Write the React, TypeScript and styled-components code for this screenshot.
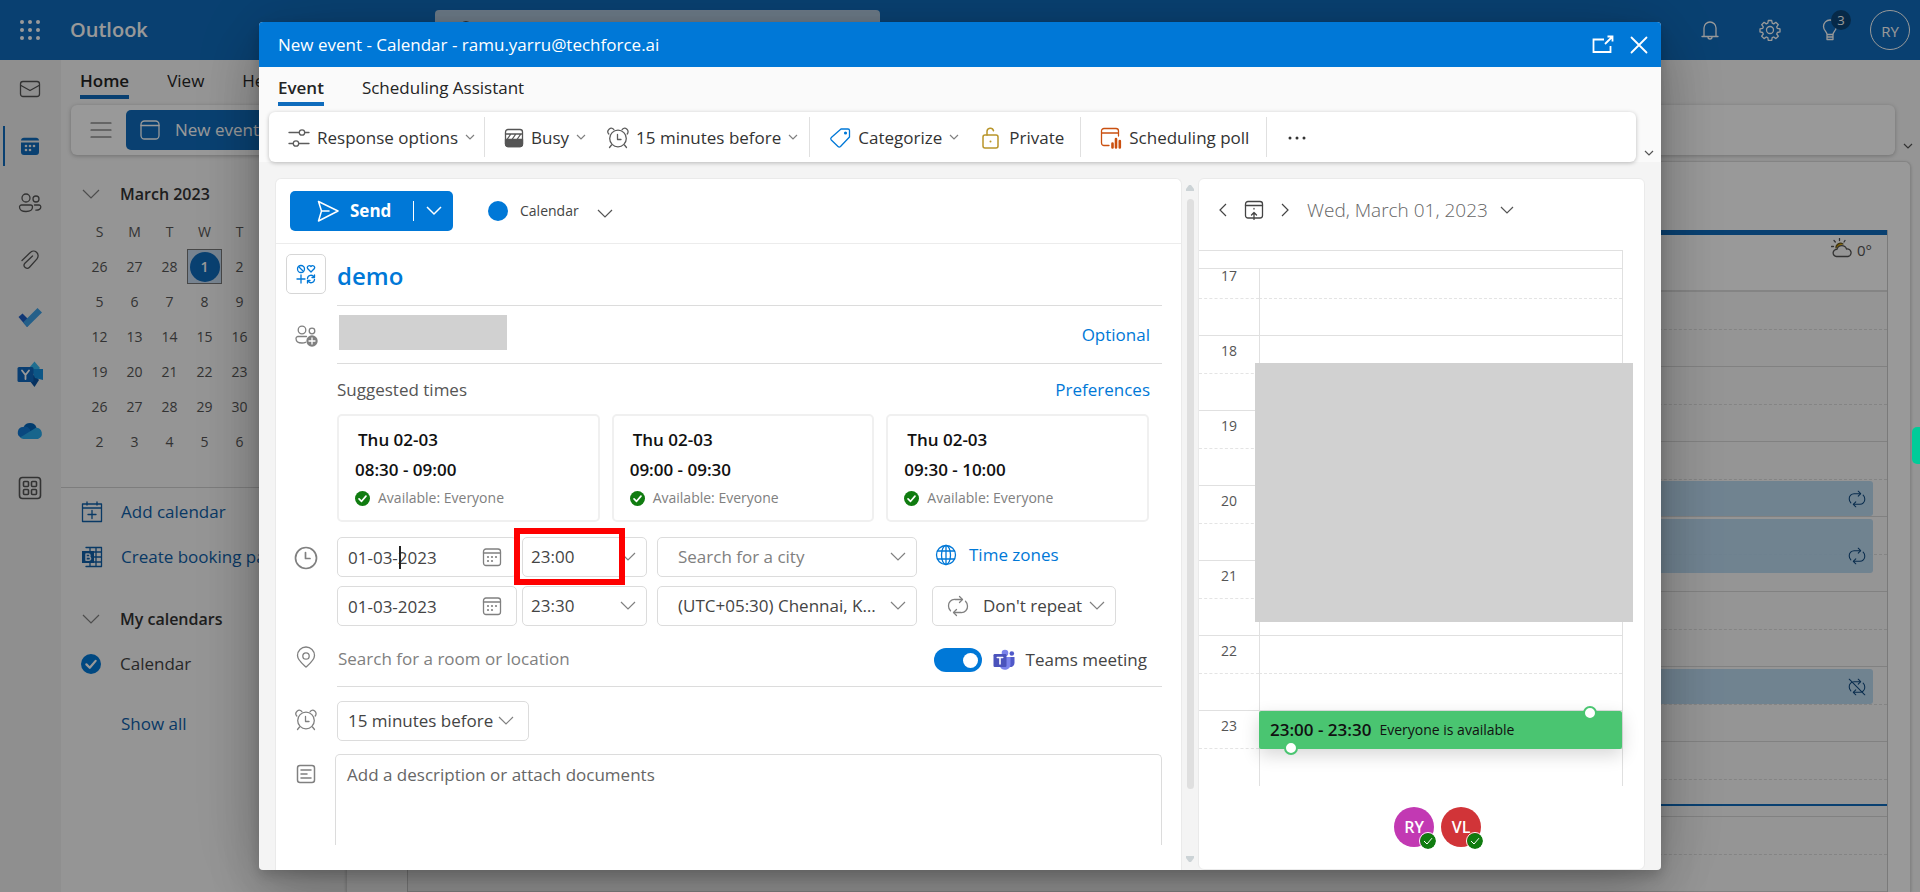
import React from "react";
import styled, { createGlobalStyle, css } from "styled-components";

const FONT = `"Open Sans", "Noto Sans", "Liberation Sans", sans-serif`;
const BLUE = "#0078d7";
const BRAND = "#0f6cbd";
const LINE = "#e0e0e0";
const GREY = "#808080";
const GREEN = "#107c10";

const GlobalStyle = createGlobalStyle`
  *, *::before, *::after { box-sizing: border-box; }
  html, body { margin: 0; height: 100%; overflow: hidden; }
  body { font-family: ${FONT}; font-size: 17px; line-height: 24px; color: #323130; }
  button, input, select, textarea { font: inherit; color: inherit; margin: 0; padding: 0; border: 0; background: none; outline: 0; }
  button { cursor: pointer; }
  a { text-decoration: none; color: inherit; }
  h1, h2, h3, p, ul, ol { margin: 0; padding: 0; font: inherit; list-style: none; }
  svg { display: block; flex: none; }
`;

/* ---------- icons ---------- */

type IconProps = { size?: number; sw?: number; children?: React.ReactNode; color?: string; box?: string };
const Svg = ({ size = 22, sw = 1.3, color = "currentColor", box = "0 0 22 22", children }: IconProps) => (
  <svg width={size} height={size} viewBox={box} fill="none" stroke={color} strokeWidth={sw} strokeLinecap="round" strokeLinejoin="round" aria-hidden="true">
    {children}
  </svg>
);

const Chevron = ({ w = 16, color = GREY, sw = 1.2 }: { w?: number; color?: string; sw?: number }) => (
  <svg width={w} height={w / 2 + 2} viewBox={`0 0 ${w} ${w / 2 + 2}`} fill="none" stroke={color} strokeWidth={sw} aria-hidden="true">
    <path d={`M1 1 L${w / 2} ${w / 2} L${w - 1} 1`} />
  </svg>
);
const Side = ({ flip }: { flip?: boolean }) => (
  <svg width="8" height="14" viewBox="0 0 8 14" fill="none" stroke="#444" strokeWidth="1.2" aria-hidden="true">
    <path d={flip ? "M1 1 L7 7 L1 13" : "M7 1 L1 7 L7 13"} />
  </svg>
);
const Waffle = () => (
  <Svg size={20} box="0 0 20 20">
    {[2, 10, 18].map((y) => [2, 10, 18].map((x) => <circle key={`${x}${y}`} cx={x} cy={y} r="2" fill="#fff" stroke="none" />))}
  </Svg>
);
const Mail = () => (
  <Svg><rect x="1.5" y="3.5" width="19" height="15" rx="2.5" /><path d="M2 7.5 L11 12.5 L20 7.5" /></Svg>
);
const CalFilled = () => (
  <Svg>
    <path d="M2 7.5H20V17a3 3 0 0 1-3 3H5a3 3 0 0 1-3-3Z M2 5.5A3 3 0 0 1 5 2.8H17a3 3 0 0 1 3 2.7Z" fill={BRAND} stroke="none" />
    {[[11, 11], [15, 11], [7, 11], [7, 15], [11, 15]].map(([x, y]) => <circle key={`${x}-${y}`} cx={x} cy={y} r="1.3" fill="#f0f0f0" stroke="none" />)}
  </Svg>
);
const People = () => (
  <Svg size={24} box="0 0 24 24">
    <circle cx="8" cy="7" r="4" /><circle cx="18" cy="8" r="3" />
    <path d="M3.5 14H12.5a2 2 0 0 1 2 2c0 3-2.5 4.5-6.5 4.5S1.5 19 1.5 16a2 2 0 0 1 2-2Z" />
    <path d="M16.5 14H21a1.8 1.8 0 0 1 1.8 2c0 2-2 3.2-5 3.1" />
  </Svg>
);
const Clip = () => (
  <Svg><path d="M3 11.5 L11 3.8a4.5 4.5 0 0 1 7 6L10.5 18.2a3 3 0 0 1-4.6-4L13.5 7" /></Svg>
);
const Todo = () => (
  <Svg size={26} box="0 0 26 26">
    <path d="M1.5 13 L5.5 9.5 L14 18 L10 23Z" fill="#1d5cc4" stroke="none" />
    <path d="M6 18.5 L20.5 4 L25 8.5 L10.3 23Z" fill="#3c9fe4" stroke="none" />
  </Svg>
);
const Yammer = () => (
  <Svg size={26} box="0 0 26 26">
    <path d="M17.5 0.5 L23 7 L17.5 13 L12 7Z" fill="#35b8f1" stroke="none" />
    <path d="M17.5 13 L22 19 L17.5 26 L12 19Z" fill="#0b53a0" stroke="none" />
    <path d="M14 8 L26 8 V19 L18 17Z" fill="#1490df" stroke="none" />
    <rect x="0.5" y="6" width="16" height="15" rx="1.5" fill="#1068bf" stroke="none" />
    <path d="M5 9.5 L8.5 14 L12 9.5 M8.5 14 V18" stroke="#fff" strokeWidth="1.8" />
  </Svg>
);
const OneDrive = () => (
  <Svg size={26} box="0 0 26 26">
    <path d="M6.5 9.5A7 7 0 0 1 19.5 9.5L14 17Z" fill="#0364b8" stroke="none" />
    <path d="M6 9a6 6 0 0 1 7 2.5L14 17L4 19.5A5.5 5.5 0 0 1 6 9Z" fill="#0f78d4" stroke="none" />
    <path d="M3 19.5L19 9.8a6 5.8 0 0 1 2 11.2H6.500a5 5 0 0 1-3.500-1.500Z" fill="#28a8ea" stroke="none" />
  </Svg>
);
const Apps = () => (
  <Svg size={24} box="0 0 24 24" sw={1.6}>
    <rect x="1.5" y="1.5" width="21" height="21" rx="3" />
    {[[5.5, 5.5], [13.5, 5.5], [5.5, 13.5], [13.5, 13.5]].map(([x, y]) => <rect key={`${x}-${y}`} x={x} y={y} width="5" height="5" rx="1" />)}
  </Svg>
);
const Burger = () => <Svg color="#555" sw={1.2}><path d="M1 4H21M1 11H21M1 18H21" /></Svg>;
const CalSimple = () => (
  <Svg size={20} box="0 0 20 20"><rect x="1" y="1" width="18" height="18" rx="3.5" /><path d="M1 5.5H19" /></Svg>
);
const Bell = () => (
  <Svg><path d="M5 17V9a6 6 0 0 1 12 0v8M3 17.5H19M9 18a2 2 0 0 0 4 0" /></Svg>
);
const Gear = () => (
  <Svg>
    <circle cx="11" cy="11" r="3.5" />
    <path d="M9.3 1.5h3.4l.5 2.7 1.5.7 2.2-1.6 2.4 2.4-1.6 2.2.7 1.5 2.6.5v3l-2.6.6-.7 1.5 1.6 2.2-2.4 2.4-2.2-1.6-1.5.6-.5 2.7H9.3l-.5-2.7-1.5-.6-2.2 1.6-2.4-2.4 1.6-2.2-.7-1.5L1 12.9v-3l2.6-.5.7-1.5-1.6-2.2 2.4-2.4 2.2 1.6 1.5-.7Z" />
  </Svg>
);
const Bulb = () => (
  <Svg><path d="M8 15.5C8 12.5 4.5 11.5 4.5 7.5a6.5 6.5 0 0 1 13 0c0 4-3.5 5-3.5 8ZM8 15.5V20.5H14V15.5M8 18H14" /></Svg>
);
const Frame = () => <Svg size={18}><rect x="1" y="2" width="20" height="17" rx="2" /></Svg>;
const SearchIcon = () => <Svg size={20}><circle cx="12" cy="9" r="7" /><path d="M7 14L2 20" /></Svg>;
const AddCal = () => (
  <Svg color="#0f5fa8"><path d="M1.5 3H20.5V20.5H1.5ZM1.5 7H20.5M6 1V4M16 1V4M11 9.5V17.5M7 13.5H15" /></Svg>
);
const Booking = () => (
  <Svg color="#0f5fa8">
    <path d="M5 1.5H20.5V20.5H5M9 1.5V6M15 1.5V20.5M5 6H20.5M12 11H20.5M5 16H20.5M9 16V20.5" />
    <rect x="1" y="5" width="12" height="12" fill="#0f5fa8" stroke="none" />
    <path d="M5 8H7.5a1.5 1.5 0 0 1 0 3H5ZM5 11H8a1.5 1.5 0 0 1 0 3.2H5Z" stroke="#e8f1fa" strokeWidth="1.5" />
  </Svg>
);
const CheckDot = ({ size = 16, color = GREEN, thin }: { size?: number; color?: string; thin?: boolean }) => (
  <Svg size={size} box="0 0 16 16" sw={thin ? 1 : 1.8}>
    <circle cx="8" cy="8" r="8" fill={color} stroke="none" /><path d="M4.3 8.3L7 11L11.7 5.5" stroke="#fff" />
  </Svg>
);
const Weather = () => (
  <Svg size={22}>
    <path d="M5 10a4.5 4.5 0 0 1 7-4" fill="#e0a800" stroke="#6a5a20" />
    <path d="M5.5 18.5a3.6 3.6 0 0 1 .5-7.2 5 5 0 0 1 9.5-.3 3.8 3.8 0 0 1 1.5 7.5Z" fill="#fafafa" />
    <path d="M8.5 0.5V2.5M3 2.5L4.3 4M14 2.5L13 4M0.5 8.5H2.5" />
  </Svg>
);
const Repeat = ({ off, size = 22 }: { off?: boolean; size?: number }) => (
  <Svg size={size}>
    <path d="M12.5 1.5L15.5 4.5L12.5 7.5M9.5 14.5L6.5 17.5L9.5 20.5" />
    <path d="M15 4.5H8a6 6 0 0 0-6.5 6.5c0 2 .8 3.5 2 4.7M7 17.5H14a6 6 0 0 0 6.5-6.5c0-2-.8-3.5-2-4.7" />
    {off && <path d="M1.5 1.5L20.5 20.5" />}
  </Svg>
);
const PopOut = () => (
  <Svg color="#fff" sw={1.8}><path d="M12 5.5H1.5V18H18.5V12M13 10L20 3M15.5 2.5H20.5V7.5" strokeLinecap="butt" strokeLinejoin="miter" /></Svg>
);
const Close = () => <Svg size={18} box="0 0 18 18" color="#fff" sw={1.8}><path d="M1.5 1.5L16.5 16.5M16.5 1.5L1.5 16.5" /></Svg>;
const Sliders = () => (
  <Svg color="#5c5c5c"><path d="M1 5.5H11M17 5.5H21M1 16.5H5M11 16.5H21" /><circle cx="14" cy="5.5" r="2.7" /><circle cx="8" cy="16.5" r="2.7" /></Svg>
);
const BusyIcon = () => (
  <Svg size={20} box="0 0 20 20" color="#555">
    <rect x="1.5" y="1.5" width="17" height="17" rx="2.5" />
    <path d="M1.5 11.5H18.5V16a2.5 2.5 0 0 1-2.5 2.5H4a2.5 2.5 0 0 1-2.5-2.5Z" fill="#555" />
    <path d="M1.5 6H18.5M3 11.5L6.5 6.5M8 11.5L11.5 6.5M13 11.5L16.5 6.5" />
  </Svg>
);
const Alarm = ({ color = "#5c5c5c" }: { color?: string }) => (
  <Svg color={color}>
    <circle cx="11" cy="11.5" r="8.3" />
    <path d="M10.5 7.5V12.5H14M4.5 18L2.5 20.5M17.5 18L19.5 20.5" />
    <path d="M1.8 7A3.2 3.2 0 0 1 6.8 2.5M20.2 7A3.2 3.2 0 0 0 15.2 2.5" />
  </Svg>
);
const Tag = () => (
  <Svg color={BLUE}><path d="M12 2H19a1.5 1.5 0 0 1 1.5 1.5V10L11.5 19.5a1.8 1.8 0 0 1-2.5 0L2.3 13a1.8 1.8 0 0 1 0-2.5Z" /><circle cx="16.5" cy="6" r="0.9" fill={BLUE} /></Svg>
);
const Lock = () => (
  <Svg color="#b8952a" sw={1.5}><rect x="3" y="8" width="15" height="13" rx="2" /><path d="M7 8V4.5a3.3 3.3 0 0 1 6.5-.8" /><circle cx="10.5" cy="14.5" r="1" fill="#b8952a" stroke="none" /></Svg>
);
const Poll = () => (
  <Svg color="#ca5010">
    <path d="M9 18.5H4a2.5 2.5 0 0 1-2.5-2.5V4A2.5 2.5 0 0 1 4 1.5H16A2.5 2.5 0 0 1 18.5 4V9M1.5 6H18.5" />
    <path d="M12.5 16.5V20.5M16 12V20.5M19.8 14V20.5" strokeWidth="2.6" />
  </Svg>
);
const Dots = () => <Svg size={18} box="0 0 18 18"><g fill="#333" stroke="none"><circle cx="2" cy="9" r="1.5" /><circle cx="9" cy="9" r="1.5" /><circle cx="16" cy="9" r="1.5" /></g></Svg>;
const Plane = () => <Svg color="#fff" sw={1.5}><path d="M1.5 1.5L21 11L1.5 21L4.5 11ZM4.5 11H12" /></Svg>;
const Charm = () => (
  <Svg size={20} box="0 0 20 20" color={BLUE}>
    <circle cx="5" cy="5" r="3.5" /><path d="M2.5 2.5L7.5 7.5" />
    <path d="M15 8L11.8 4.8a1.8 1.8 0 0 1 3.2-2.3 1.8 1.8 0 0 1 3.2 2.3Z" />
    <path d="M1 15H9M5 11V19" />
    <path d="M11.5 14.5a3.5 3.5 0 0 1 6.5-1.5M18.5 15.5A3.5 3.5 0 0 1 12 17M18.5 11V13.5H16M11.5 19V16.5H14" />
  </Svg>
);
const AddPeople = () => (
  <Svg size={24} box="0 0 24 24" color={GREY}>
    <circle cx="8" cy="6" r="3.8" /><circle cx="18" cy="7" r="2.8" />
    <path d="M11.5 18.3c-1 .5-2.2.7-3.5.7-4 0-6-1.5-6-4.5a2 2 0 0 1 2-2H12.5" />
    <circle cx="18" cy="17" r="5.7" fill={GREY} stroke="none" /><path d="M18 14V20M15 17H21" stroke="#fff" />
  </Svg>
);
const Clock = () => <Svg size={24} box="0 0 24 24" color={GREY} sw={1.7}><circle cx="12" cy="12" r="10.5" /><path d="M11.5 6.5V12.5H16" /></Svg>;
const Pin = () => <Svg color={GREY}><path d="M11 21C7 17.5 2.5 14 2.5 9.5a8.5 8.5 0 0 1 17 0C19.5 14 15 17.5 11 21Z" /><circle cx="11" cy="10" r="3.2" /></Svg>;
const Note = () => <Svg color={GREY} sw={1.5}><rect x="2.5" y="2.5" width="17" height="17" rx="2.5" /><path d="M6 7H16M6 11H12M6 15H16" /></Svg>;
const CalDots = () => (
  <Svg size={20} box="0 0 20 20" color={GREY}>
    <rect x="1.5" y="2" width="17" height="16.5" rx="2.5" /><path d="M1.5 6H18.5" />
    <g fill={GREY} stroke="none">{[[6, 10], [10, 10], [14, 10], [6, 14], [10, 14]].map(([x, y]) => <circle key={`${x}-${y}`} cx={x} cy={y} r="1.1" />)}</g>
  </Svg>
);
const Globe = () => (
  <Svg color={BLUE}><circle cx="11" cy="11" r="9.5" /><ellipse cx="11" cy="11" rx="4.5" ry="9.5" /><path d="M11 1.5V20.5M2.5 7H19.5M2.5 15H19.5" /></Svg>
);
const Teams = () => (
  <Svg>
    <circle cx="12" cy="4" r="3.3" fill="#7b83eb" stroke="none" /><circle cx="18.8" cy="4.5" r="2.3" fill="#5059c9" stroke="none" />
    <path d="M15.5 8H21.5V14a4 4 0 0 1-6 3.5Z" fill="#5059c9" stroke="none" />
    <path d="M7 8H17.5V15.5a5.5 5.5 0 0 1-10.5 2Z" fill="#7b83eb" stroke="none" />
    <rect x="0.5" y="5" width="13" height="13" rx="1.2" fill="#4b53bc" stroke="none" />
    <path d="M4.3 8.5H9.7M7 8.5V15" stroke="#fff" strokeWidth="1.6" />
  </Svg>
);
const Today = () => (
  <Svg size={20} box="0 0 20 20" color="#444"><rect x="1.5" y="1.5" width="17" height="16.5" rx="2.5" /><path d="M1.5 5.5H18.5M10 19.5V12.5M7.5 15L10 12.5L12.5 15M10 8.5V9" /></Svg>
);
const Arrow = ({ down }: { down?: boolean }) => (
  <svg width="8" height="6" viewBox="0 0 8 6" aria-hidden="true"><path d={down ? "M0 0H8V2L5 6H3L0 2Z" : "M0 6H8V4L5 0H3L0 4Z"} fill="#ccd3d6" /></svg>
);

/* ---------- page behind the dialog ---------- */

const Page = styled.div`
  height: 100vh;
  display: flex;
  flex-direction: column;
  background: #f8f8f8;
`;
const Header = styled.header`
  flex: none;
  height: 60px;
  background: ${BRAND};
  color: #fff;
  display: grid;
  grid-template-columns: 435px minmax(0, 445px) 1fr;
  align-items: center;
`;
const Brand = styled.div`
  display: flex;
  align-items: center;
  gap: 30px;
  padding-left: 20px;
  font-size: 20px;
  font-weight: 600;
`;
const SearchBox = styled.label`
  height: 40px;
  border-radius: 4px;
  background: #b4cce2;
  color: #222;
  display: flex;
  align-items: center;
  gap: 8px;
  padding-left: 20px;
  input { flex: 1; min-width: 0; }
`;
const HeaderTools = styled.div`
  display: flex;
  justify-content: flex-end;
`;
const HeaderTool = styled.button`
  width: 60px;
  height: 60px;
  display: grid;
  place-items: center;
  position: relative;
`;
const Count = styled.span`
  position: absolute;
  left: 31px;
  top: 10px;
  width: 20px;
  height: 20px;
  border-radius: 50%;
  background: #0a4578;
  font-size: 13px;
  line-height: 20px;
`;
const Me = styled.span`
  width: 40px;
  height: 40px;
  border: 1px solid #fff;
  border-radius: 50%;
  font-size: 15px;
  line-height: 40px;
`;
const Columns = styled.div`
  flex: 1;
  min-height: 0;
  display: flex;
`;
const Rail = styled.nav`
  width: 61px;
  flex: none;
  background: #efefef;
  color: #555;
`;
const RailItem = styled.a<{ $on?: boolean }>`
  height: 57px;
  display: flex;
  align-items: center;
  justify-content: center;
  position: relative;
  padding-right: 1px;
  ${(p) => p.$on && css`
    &::before { content: ""; position: absolute; left: 3px; top: 9px; width: 2px; height: 40px; background: ${BRAND}; }
  `}
`;
const Main = styled.main`
  flex: 1;
  min-width: 0;
  display: flex;
  flex-direction: column;
`;
const Tabs = styled.div`
  height: 45px;
  flex: none;
  display: flex;
  align-items: flex-start;
  gap: 38px;
  padding: 9px 0 0 19px;
`;
const Tab = styled.button<{ $on?: boolean }>`
  height: 30px;
  line-height: 24px;
  padding-bottom: 2px;
  border-bottom: 4px solid ${(p) => (p.$on ? BRAND : "transparent")};
  font-weight: ${(p) => (p.$on ? 600 : 400)};
  font-size: 17px;
  white-space: nowrap;
  color: #242424;
`;
const RibbonRow = styled.div`
  display: flex;
  align-items: flex-end;
  flex: none;
  padding-left: 10px;
`;
const Ribbon = styled.div`
  flex: 1;
  min-width: 0;
  height: 50px;
  background: #fff;
  border-radius: 6px;
  box-shadow: 0 1px 4px rgba(0, 0, 0, 0.25);
  display: flex;
  align-items: center;
`;
const Collapse = styled.button`
  width: 25px;
  height: 18px;
  display: grid;
  place-items: center;
`;
const BurgerButton = styled.button`
  padding: 0 14px 0 19px;
`;
const NewEvent = styled.button`
  width: 180px;
  height: 40px;
  border-radius: 5px;
  background: ${BRAND};
  color: #fff;
  display: flex;
  align-items: center;
  gap: 15px;
  padding-left: 14px;
`;
const Split = styled.div`
  flex: 1;
  min-height: 0;
  display: flex;
`;
const CalendarSide = styled.aside`
  width: 285px;
  flex: none;
`;
const SideHead = styled.button`
  display: flex;
  align-items: center;
  gap: 20px;
  padding-left: 21px;
  height: 40px;
  font-weight: 600;
  font-size: 16px;
  color: #333;
`;
const Month = styled.div`
  padding-top: 19px;
  height: 333px;
  border-bottom: 1px solid #d0d0d0;
`;
const MiniTable = styled.table`
  margin-left: 21px;
  border-collapse: collapse;
  table-layout: fixed;
  width: 245px;
  font-size: 14px;
  color: #555;
  th, td { width: 35px; height: 35px; padding: 0; text-align: center; font-weight: 400; }
`;
const TodayCell = styled.td`
  background: #c7dbf0;
  outline: 1px solid #777;
  outline-offset: -1px;
  span { display: block; margin: 0 auto; width: 30px; line-height: 30px; border-radius: 50%; background: ${BRAND}; color: #fff; font-weight: 600; }
`;
const SideList = styled.ul`
  padding-top: 1px;
`;
const CalendarGroup = styled.section`
  padding-top: 20px;
`;
const SideItem = styled.li<{ $h?: number }>`
  height: ${(p) => p.$h ?? 45}px;
  display: flex;
  align-items: center;
  white-space: nowrap;
  padding-left: 20px;
  a, label { display: flex; align-items: center; gap: 18px; color: #0f5fa8; }
  label { color: #444; gap: 19px; }
`;
const HiddenCheck = styled.input`
  position: absolute;
  opacity: 0;
  width: 20px;
  height: 20px;
`;
const ShowAll = styled.span`
  padding-left: 40px;
`;
const BoardCard = styled.section`
  flex: 1;
  min-width: 0;
  margin: 6px 9px 0 0;
  border: 1px solid #ddd;
  border-bottom: 0;
  border-radius: 6px 6px 0 0;
  background: #fff;
  box-shadow: 0 1px 3px rgba(0, 0, 0, 0.2);
  padding: 68px 22px 0 60px;
  overflow: hidden;
`;
const Board = styled.div`
  border: 1px solid #ccc;
  border-width: 0 1px;
  position: relative;
`;
const BoardHead = styled.div`
  border-top: 5px solid ${BRAND};
  height: 62px;
  border-bottom: 2px solid #ddd;
  display: flex;
  justify-content: flex-end;
  align-items: flex-start;
  gap: 4px;
  padding: 3px 15px 0 0;
  font-size: 15px;
  color: #555;
`;
const HalfHour = styled.div<{ $solid?: boolean; $h: number }>`
  height: ${(p) => p.$h}px;
  background: #f9f9f9;
  border-bottom: 1px ${(p) => (p.$solid ? "solid #d8d8d8" : "dashed #dcdcdc")};
`;
const BoardEvent = styled.div<{ $top: number; $h: number }>`
  position: absolute;
  left: 1px;
  right: 14px;
  top: ${(p) => p.$top}px;
  height: ${(p) => p.$h}px;
  border-radius: 3px;
  background: rgba(180, 214, 240, 0.9);
  color: #0f4a80;
  display: flex;
  justify-content: flex-end;
  align-items: flex-end;
  padding: 8px 7px;
`;
const NowLine = styled.div`
  position: absolute;
  left: 0;
  right: 0;
  top: 574px;
  height: 2px;
  background: ${BRAND};
`;
const Dim = styled.div`
  position: fixed;
  inset: 0;
  background: rgba(0, 0, 0, 0.4);
`;
const EdgeHandle = styled.button`
  position: fixed;
  right: 0;
  top: 427px;
  width: 8px;
  height: 37px;
  border-radius: 5px 0 0 5px;
  background: #00cc99;
`;

/* ---------- dialog ---------- */

const Dialog = styled.div`
  position: fixed;
  inset: 22px 259px;
  border-radius: 4px;
  overflow: hidden;
  background: #f4f4f4;
  display: flex;
  flex-direction: column;
`;
const DialogShadow = styled.div`
  position: fixed;
  inset: 22px 259px;
  border-radius: 4px;
  box-shadow: 0 26px 58px rgba(0, 0, 0, 0.22), 0 5px 14px rgba(0, 0, 0, 0.18), 0 0 80px rgba(0, 0, 0, 0.15);
`;
const TitleBar = styled.div`
  flex: none;
  height: 45px;
  background: ${BLUE};
  color: #fff;
  display: flex;
  align-items: center;
  justify-content: space-between;
  padding: 0 13px 0 19px;
  h1 { font-size: 17px; }
  div { display: flex; gap: 16px; align-items: center; }
`;
const DialogTop = styled.div`
  background: #fafafa;
  flex: none;
`;
const RibbonGroup = styled.div<{ $end: number }>`
  height: 40px;
  display: flex;
  align-items: center;
  gap: 21px;
  padding: 0 ${(p) => p.$end}px 0 19px;
  border-right: 1px solid ${LINE};
`;
const RibbonButton = styled.button`
  display: flex;
  align-items: center;
  gap: 7px;
  padding-top: 1px;
  white-space: nowrap;
  color: #333;
  font-size: 17px;
`;
const MoreButton = styled(RibbonButton)`
  padding-left: 21px;
`;
const Body = styled.div`
  flex: 1;
  min-height: 0;
  display: flex;
  padding: 16px 16px 0;
`;
const FormCard = styled.form`
  flex: 1;
  min-width: 0;
  background: #fff;
  border: 1px solid #eaeaea;
  border-bottom: 0;
  border-radius: 6px 6px 0 0;
  display: flex;
  flex-direction: column;
`;
const FormBar = styled.div`
  height: 65px;
  flex: none;
  border-bottom: 1px solid #ececec;
  display: flex;
  align-items: center;
  gap: 35px;
  padding: 0 14px;
`;
const SendSplit = styled.div`
  display: flex;
  align-items: center;
  width: 163px;
  height: 40px;
  border-radius: 5px;
  background: ${BLUE};
  color: #fff;
`;
const SendMain = styled.button`
  flex: 1;
  height: 20px;
  border-right: 1px solid #fff;
  display: flex;
  align-items: center;
  gap: 11px;
  padding-left: 27px;
  font-weight: 700;
  color: #fff;
`;
const SendMore = styled.button`
  width: 39px;
  height: 40px;
  display: grid;
  place-items: center;
`;
const CalendarPick = styled.button`
  display: flex;
  align-items: center;
  gap: 12px;
  font-size: 14px;
  color: #444;
  i { width: 20px; height: 20px; border-radius: 50%; background: ${BLUE}; }
  svg { margin: 6px 0 0 6px; }
`;
const FormRow = styled.div<{ $grow?: boolean }>`
  display: grid;
  grid-template-columns: 61px minmax(0, 1fr);
  padding-right: 19px;
  ${(p) => (p.$grow ? "flex: 1; min-height: 0;" : "flex: none;")}
`;
const RowIcon = styled.div<{ $h: number; $top?: number }>`
  height: ${(p) => p.$h}px;
  display: grid;
  place-items: center;
  padding: ${(p) => p.$top ?? 0}px 1px 0 0;
`;
const CharmButton = styled.button`
  width: 40px;
  height: 40px;
  border: 1px solid #d6d6d6;
  border-radius: 5px;
  display: grid;
  place-items: center;
  margin: 10px 0 0 10px;
`;
const Field = styled.div<{ $h: number }>`
  height: ${(p) => p.$h}px;
  border-bottom: 1px solid #dcdcdc;
  display: flex;
  align-items: center;
  justify-content: space-between;
`;
const TitleInput = styled.input`
  width: 100%;
  height: 36px;
  padding-top: 2px;
  font-size: 24px;
  font-weight: 600;
  color: ${BLUE};
`;
const Redacted = styled.div`
  background: #d1d1d1;
`;
const Guest = styled(Redacted)`
  width: 168px;
  height: 35px;
  margin: 0 0 5px 2px;
`;
const BlueLink = styled.a`
  color: ${BLUE};
  display: inline-flex;
  align-items: center;
  gap: 12px;
`;
const OptionalLink = styled(BlueLink)`
  padding-right: 12px;
`;
const SuggestHead = styled.div`
  height: 50px;
  display: flex;
  align-items: center;
  justify-content: space-between;
  padding: 1px 12px 0 0;
  color: #555;
`;
const Suggestions = styled.div`
  display: grid;
  grid-template-columns: repeat(3, 1fr);
  gap: 12px;
  margin-right: 13px;
`;
const Suggestion = styled.button`
  height: 108px;
  border: 2px solid #f0f0f0;
  border-radius: 5px;
  padding: 0 0 0 16px;
  text-align: left;
  display: grid;
  grid-template-rows: 30px 30px 26px;
  align-content: center;
  align-items: center;
  font-size: 17px;
  color: #111;
  strong { font-weight: 600; padding-left: 3px; }
  span { font-weight: 600; }
  small { font-size: 14px; color: ${GREY}; display: flex; align-items: center; gap: 8px; }
`;
const Times = styled.div`
  margin-top: 15px;
  display: grid;
  gap: 9px;
`;
const TimeRow = styled.div`
  display: flex;
  align-items: center;
  gap: 5px;
`;
const Box = styled.label<{ $w: number; $pad?: number; $end?: number; $icon?: number; $ml?: number; $muted?: boolean }>`
  position: relative;
  width: ${(p) => p.$w}px;
  height: 40px;
  margin-left: ${(p) => p.$ml ?? 0}px;
  border: 1px solid #dcdcdc;
  border-radius: 5px;
  display: flex;
  align-items: center;
  flex: none;
  color: ${(p) => (p.$muted ? GREY : "#444")};
  input, select {
    appearance: none;
    width: 100%;
    height: 100%;
    padding: 0 ${(p) => p.$end ?? 38}px 0 ${(p) => p.$pad ?? 10}px;
    font-size: 17px;
    text-overflow: ellipsis;
    white-space: nowrap;
    overflow: hidden;
  }
  > svg:last-of-type { position: absolute; right: ${(p) => p.$icon ?? 10}px; pointer-events: none; }
`;
const Caret = styled.i`
  position: absolute;
  left: 61px;
  top: 8px;
  width: 2px;
  height: 23px;
  background: #222;
`;
const Highlight = styled.span`
  position: absolute;
  left: -9px;
  top: -10px;
  width: 111px;
  height: 57px;
  border: 6px solid #fe0000;
  pointer-events: none;
`;
const TimeRight = styled.div`
  padding-left: 13px;
`;
const LeadIcon = styled.span`
  position: absolute;
  left: 14px;
  color: ${GREY};
`;
const PlaceInput = styled.input`
  flex: 1;
  min-width: 0;
  padding: 6px 0 0 1px;
  font-size: 17px;
  &::placeholder { color: ${GREY}; opacity: 1; }
`;
const Meeting = styled.label`
  display: flex;
  align-items: center;
  gap: 11px;
  padding: 8px 15px 0 0;
  color: #444;
`;
const Toggle = styled.input`
  appearance: none;
  width: 48px;
  height: 24px;
  border-radius: 12px;
  background: ${BLUE};
  display: flex;
  align-items: center;
  &::after { content: ""; width: 15px; height: 15px; border-radius: 50%; background: #fff; margin-left: 29px; }
`;
const Reminder = styled.div`
  padding-top: 14px;
`;
const Description = styled.textarea`
  display: block;
  width: calc(100% + 2px);
  height: calc(100% - 38px);
  margin: 13px 0 0 -2px;
  border: 1px solid #dcdcdc;
  border-bottom: 0;
  border-radius: 5px 5px 0 0;
  padding: 8px 11px;
  resize: none;
  overflow: hidden;
  font-size: 17px;
  &::placeholder { color: #666; opacity: 1; }
`;
const Scroll = styled.div`
  width: 16px;
  flex: none;
  display: flex;
  flex-direction: column;
  align-items: center;
  padding: 7px 0 8px;
  gap: 8px;
  div { width: 7px; flex: 591; border-radius: 4px; background: #dfdfdf; }
  span { flex: 51; }
`;
const Panel = styled.section`
  width: 447px;
  flex: none;
  background: #fff;
  border: 1px solid #eaeaea;
  border-radius: 6px;
  display: flex;
  flex-direction: column;
`;
const PanelHead = styled.div`
  height: 72px;
  display: flex;
  align-items: center;
  padding: 0 0 9px 20px;
  gap: 17px;
  border-bottom: 1px solid ${LINE};
  margin-right: 21px;
  h2 { font-size: 19px; color: #666; display: flex; align-items: center; gap: 12px; font-weight: 300; white-space: nowrap; padding-left: 1px; }
`;
const DayGrid = styled.div`
  position: relative;
  margin-right: 21px;
  border-right: 1px solid ${LINE};
`;
const AllDay = styled.div`
  height: 18px;
  border-bottom: 1px solid ${LINE};
`;
const HourRow = styled.div<{ $first?: boolean; $last?: boolean }>`
  display: grid;
  grid-template-columns: 60px 1fr;
  grid-template-rows: ${(p) => (p.$first ? 30 : 38)}px 1fr;
  height: ${(p) => (p.$first ? 67 : 75)}px;
  border-bottom: ${(p) => (p.$last ? "0" : `1px solid ${LINE}`)};
  font-size: 14px;
  color: #555;
  > span { text-align: center; line-height: ${(p) => (p.$first ? 13 : 29)}px; }
  > span, > i { border-bottom: 1px dashed #e4e4e4; }
  > b { grid-column: 2; }
  > i, > b { border-left: 1px solid ${LINE}; }
`;
const BusyBlock = styled(Redacted)`
  position: absolute;
  left: 56px;
  right: -11px;
  top: 112px;
  height: 259px;
`;
const Slot = styled.div`
  position: absolute;
  left: 60px;
  right: 0;
  top: 460px;
  height: 38px;
  border-radius: 2px;
  background: #4ac571;
  box-shadow: 0 6px 18px rgba(0, 0, 0, 0.16);
  display: flex;
  align-items: center;
  gap: 8px;
  padding-left: 11px;
  color: #111;
  font-size: 17px;
  font-weight: 600;
  small { font-size: 14px; font-weight: 400; }
`;
const Grip = styled.i<{ $top?: boolean }>`
  position: absolute;
  width: 14px;
  height: 14px;
  border-radius: 50%;
  background: #fff;
  border: 2px solid #4ac571;
  ${(p) => (p.$top ? "right: 25px; top: -5px;" : "left: 25px; bottom: -6px;")}
`;
const Avatars = styled.div`
  display: flex;
  justify-content: center;
  gap: 7px;
  padding: 21px 0 0 32px;
`;
const Avatar = styled.span<{ $c: string }>`
  position: relative;
  width: 40px;
  height: 40px;
  border-radius: 50%;
  background: ${(p) => p.$c};
  color: #fff;
  font-size: 16px;
  font-weight: 600;
  line-height: 40px;
  text-align: center;
  svg { position: absolute; right: -3px; bottom: -3px; border: 1px solid #fff; border-radius: 50%; }
`;

const WEEKS = [
  [26, 27, 28, 1, 2, 3, 4],
  [5, 6, 7, 8, 9, 10, 11],
  [12, 13, 14, 15, 16, 17, 18],
  [19, 20, 21, 22, 23, 24, 25],
  [26, 27, 28, 29, 30, 31, 1],
  [2, 3, 4, 5, 6, 7, 8],
];
const SUGGESTED = ["08:30 - 09:00", "09:00 - 09:30", "09:30 - 10:00"];
const HOURS = [17, 18, 19, 20, 21, 22, 23];
const BOARD_HOURS = Array.from({ length: 9 }, (_, i) => i);

const Backdrop = () => (
  <Page>
    <Header>
      <Brand><Waffle />Outlook</Brand>
      <SearchBox><SearchIcon /><input aria-label="Search" /></SearchBox>
      <HeaderTools>
        <HeaderTool aria-label="Meet now"><Frame /></HeaderTool>
        <HeaderTool aria-label="Notes"><Frame /></HeaderTool>
        <HeaderTool aria-label="My day"><Frame /></HeaderTool>
        <HeaderTool aria-label="Notifications"><Bell /></HeaderTool>
        <HeaderTool aria-label="Settings"><Gear /></HeaderTool>
        <HeaderTool aria-label="Tips"><Bulb /><Count>3</Count></HeaderTool>
        <HeaderTool aria-label="Account"><Me>RY</Me></HeaderTool>
      </HeaderTools>
    </Header>
    <Columns>
      <Rail>
        <RailItem href="#mail" aria-label="Mail"><Mail /></RailItem>
        <RailItem href="#calendar" aria-label="Calendar" $on><CalFilled /></RailItem>
        <RailItem href="#people" aria-label="People"><People /></RailItem>
        <RailItem href="#files" aria-label="Files"><Clip /></RailItem>
        <RailItem href="#todo" aria-label="To Do"><Todo /></RailItem>
        <RailItem href="#yammer" aria-label="Yammer"><Yammer /></RailItem>
        <RailItem href="#onedrive" aria-label="OneDrive"><OneDrive /></RailItem>
        <RailItem href="#apps" aria-label="Apps"><Apps /></RailItem>
      </Rail>
      <Main>
        <Tabs><Tab $on>Home</Tab><Tab>View</Tab><Tab>Help</Tab></Tabs>
        <RibbonRow>
          <Ribbon>
            <BurgerButton aria-label="Toggle sidebar"><Burger /></BurgerButton>
            <NewEvent><CalSimple />New event</NewEvent>
          </Ribbon>
          <Collapse aria-label="Collapse ribbon"><Chevron w={10} color="#555" /></Collapse>
        </RibbonRow>
        <Split>
          <CalendarSide>
            <Month>
              <SideHead><Chevron w={18} />March 2023</SideHead>
              <MiniTable>
                <thead><tr>{["S", "M", "T", "W", "T", "F", "S"].map((d, i) => <th key={i} scope="col">{d}</th>)}</tr></thead>
                <tbody>
                  {WEEKS.map((w, r) => (
                    <tr key={r}>{w.map((d, c) => (r === 0 && d === 1 ? <TodayCell key={c}><span>{d}</span></TodayCell> : <td key={c}>{d}</td>))}</tr>
                  ))}
                </tbody>
              </MiniTable>
            </Month>
            <SideList>
              <SideItem><a href="#add"><AddCal />Add calendar</a></SideItem>
              <SideItem><a href="#booking"><Booking />Create booking page</a></SideItem>
            </SideList>
            <CalendarGroup>
              <SideHead><Chevron w={18} />My calendars</SideHead>
              <SideList>
                <SideItem $h={48}><label><HiddenCheck type="checkbox" defaultChecked /><CheckDot size={20} color={BLUE} />Calendar</label></SideItem>
                <SideItem $h={72}><a href="#all"><ShowAll>Show all</ShowAll></a></SideItem>
              </SideList>
            </CalendarGroup>
          </CalendarSide>
          <BoardCard>
            <Board>
              <BoardHead><Weather />0°</BoardHead>
              {BOARD_HOURS.map((i) => (
                <React.Fragment key={i}><HalfHour $h={38} /><HalfHour $h={37} $solid /></React.Fragment>
              ))}
              <BoardEvent $top={251} $h={35}><Repeat size={18} /></BoardEvent>
              <BoardEvent $top={289} $h={54}><Repeat size={18} /></BoardEvent>
              <BoardEvent $top={439} $h={35}><Repeat size={18} off /></BoardEvent>
              <NowLine />
            </Board>
          </BoardCard>
        </Split>
      </Main>
    </Columns>
  </Page>
);

const EventForm = () => (
  <FormCard onSubmit={(e) => e.preventDefault()}>
    <FormBar>
      <SendSplit>
        <SendMain type="submit"><Plane />Send</SendMain>
        <SendMore type="button" aria-label="More send options"><Chevron w={16} color="#fff" sw={1.5} /></SendMore>
      </SendSplit>
      <CalendarPick type="button"><i />Calendar<Chevron color="#555" /></CalendarPick>
    </FormBar>
    <FormRow>
      <CharmButton type="button" aria-label="Choose a charm"><Charm /></CharmButton>
      <Field $h={62}><TitleInput aria-label="Title" defaultValue="demo" /></Field>
    </FormRow>
    <FormRow>
      <RowIcon $h={58} $top={2}><AddPeople /></RowIcon>
      <Field $h={58}><Guest /><OptionalLink href="#optional">Optional</OptionalLink></Field>
    </FormRow>
    <FormRow>
      <span />
      <div>
        <SuggestHead>Suggested times<BlueLink href="#preferences">Preferences</BlueLink></SuggestHead>
        <Suggestions>
          {SUGGESTED.map((t) => (
            <Suggestion type="button" key={t}>
              <strong>Thu 02-03</strong><span>{t}</span>
              <small><CheckDot size={15} />Available: Everyone</small>
            </Suggestion>
          ))}
        </Suggestions>
      </div>
    </FormRow>
    <FormRow>
      <RowIcon $h={72}><Clock /></RowIcon>
      <Times>
        <TimeRow>
          <Box $w={180} $icon={14}><input aria-label="Start date" defaultValue="01-03-2023" /><Caret /><CalDots /></Box>
          <Box $w={125} $pad={8}>
            <select aria-label="Start time"><option>23:00</option></select><Chevron /><Highlight />
          </Box>
          <Box $w={260} $pad={20} $ml={5} $muted><select aria-label="City"><option>Search for a city</option></select><Chevron /></Box>
          <TimeRight><BlueLink href="#zones"><Globe />Time zones</BlueLink></TimeRight>
        </TimeRow>
        <TimeRow>
          <Box $w={180} $icon={14}><input aria-label="End date" defaultValue="01-03-2023" /><CalDots /></Box>
          <Box $w={125} $pad={8}><select aria-label="End time"><option>23:30</option></select><Chevron /></Box>
          <Box $w={260} $pad={20} $ml={5}><select aria-label="Time zone"><option>(UTC+05:30) Chennai, Kolkata, Mumbai, New Delhi</option></select><Chevron /></Box>
          <Box $w={184} $pad={50} $end={28} $ml={10}>
            <LeadIcon><Repeat /></LeadIcon>
            <select aria-label="Repeat"><option>Don't repeat</option></select><Chevron />
          </Box>
        </TimeRow>
      </Times>
    </FormRow>
    <FormRow>
      <RowIcon $h={61}><Pin /></RowIcon>
      <Field $h={61}>
        <PlaceInput aria-label="Location" placeholder="Search for a room or location" />
        <Meeting><Toggle type="checkbox" role="switch" defaultChecked /><Teams />Teams meeting</Meeting>
      </Field>
    </FormRow>
    <FormRow>
      <RowIcon $h={54} $top={12}><Alarm color={GREY} /></RowIcon>
      <Reminder><Box $w={192} $end={30} $icon={14}><select aria-label="Reminder"><option>15 minutes before</option></select><Chevron /></Box></Reminder>
    </FormRow>
    <FormRow $grow>
      <RowIcon $h={66}><Note /></RowIcon>
      <Description aria-label="Description" placeholder="Add a description or attach documents" />
    </FormRow>
  </FormCard>
);

const DayPanel = () => (
  <Panel>
    <PanelHead>
      <button aria-label="Previous day"><Side /></button>
      <button aria-label="Today"><Today /></button>
      <button aria-label="Next day"><Side flip /></button>
      <h2>Wed, March 01, 2023<Chevron w={14} color="#555" /></h2>
    </PanelHead>
    <DayGrid>
      <AllDay />
      {HOURS.map((h, i) => (
        <HourRow key={h} $first={i === 0} $last={h === 23}><span>{h}</span><i /><b /></HourRow>
      ))}
      <BusyBlock />
      <Slot>23:00 - 23:30 <small>Everyone is available</small><Grip $top /><Grip /></Slot>
    </DayGrid>
    <Avatars>
      <Avatar $c="#c239b3">RY<CheckDot size={18} thin /></Avatar>
      <Avatar $c="#d13438">VL<CheckDot size={18} thin /></Avatar>
    </Avatars>
  </Panel>
);

export default function App() {
  return (
    <>
      <GlobalStyle />
      <Backdrop />
      <Dim />
      <EdgeHandle aria-label="Open side panel" />
      <DialogShadow />
      <Dialog role="dialog" aria-label="New event">
        <TitleBar>
          <h1>New event - Calendar - ramu.yarru@techforce.ai</h1>
          <div>
            <button aria-label="Open in new window"><PopOut /></button>
            <button aria-label="Close"><Close /></button>
          </div>
        </TitleBar>
        <DialogTop>
          <Tabs><Tab $on>Event</Tab><Tab>Scheduling Assistant</Tab></Tabs>
          <RibbonRow>
            <Ribbon>
              <RibbonGroup $end={9}><RibbonButton><Sliders />Response options<Chevron w={10} /></RibbonButton></RibbonGroup>
              <RibbonGroup $end={11}>
                <RibbonButton><BusyIcon />Busy<Chevron w={10} /></RibbonButton>
                <RibbonButton><Alarm />15 minutes before<Chevron w={10} /></RibbonButton>
              </RibbonGroup>
              <RibbonGroup $end={16}>
                <RibbonButton><Tag />Categorize<Chevron w={10} /></RibbonButton>
                <RibbonButton><Lock />Private</RibbonButton>
              </RibbonGroup>
              <RibbonGroup $end={17}><RibbonButton><Poll />Scheduling poll</RibbonButton></RibbonGroup>
              <MoreButton aria-label="More options"><Dots /></MoreButton>
            </Ribbon>
            <Collapse aria-label="Collapse ribbon"><Chevron w={10} color="#555" /></Collapse>
          </RibbonRow>
        </DialogTop>
        <Body>
          <EventForm />
          <Scroll><Arrow /><div /><span /><Arrow down /></Scroll>
          <DayPanel />
        </Body>
      </Dialog>
    </>
  );
}
